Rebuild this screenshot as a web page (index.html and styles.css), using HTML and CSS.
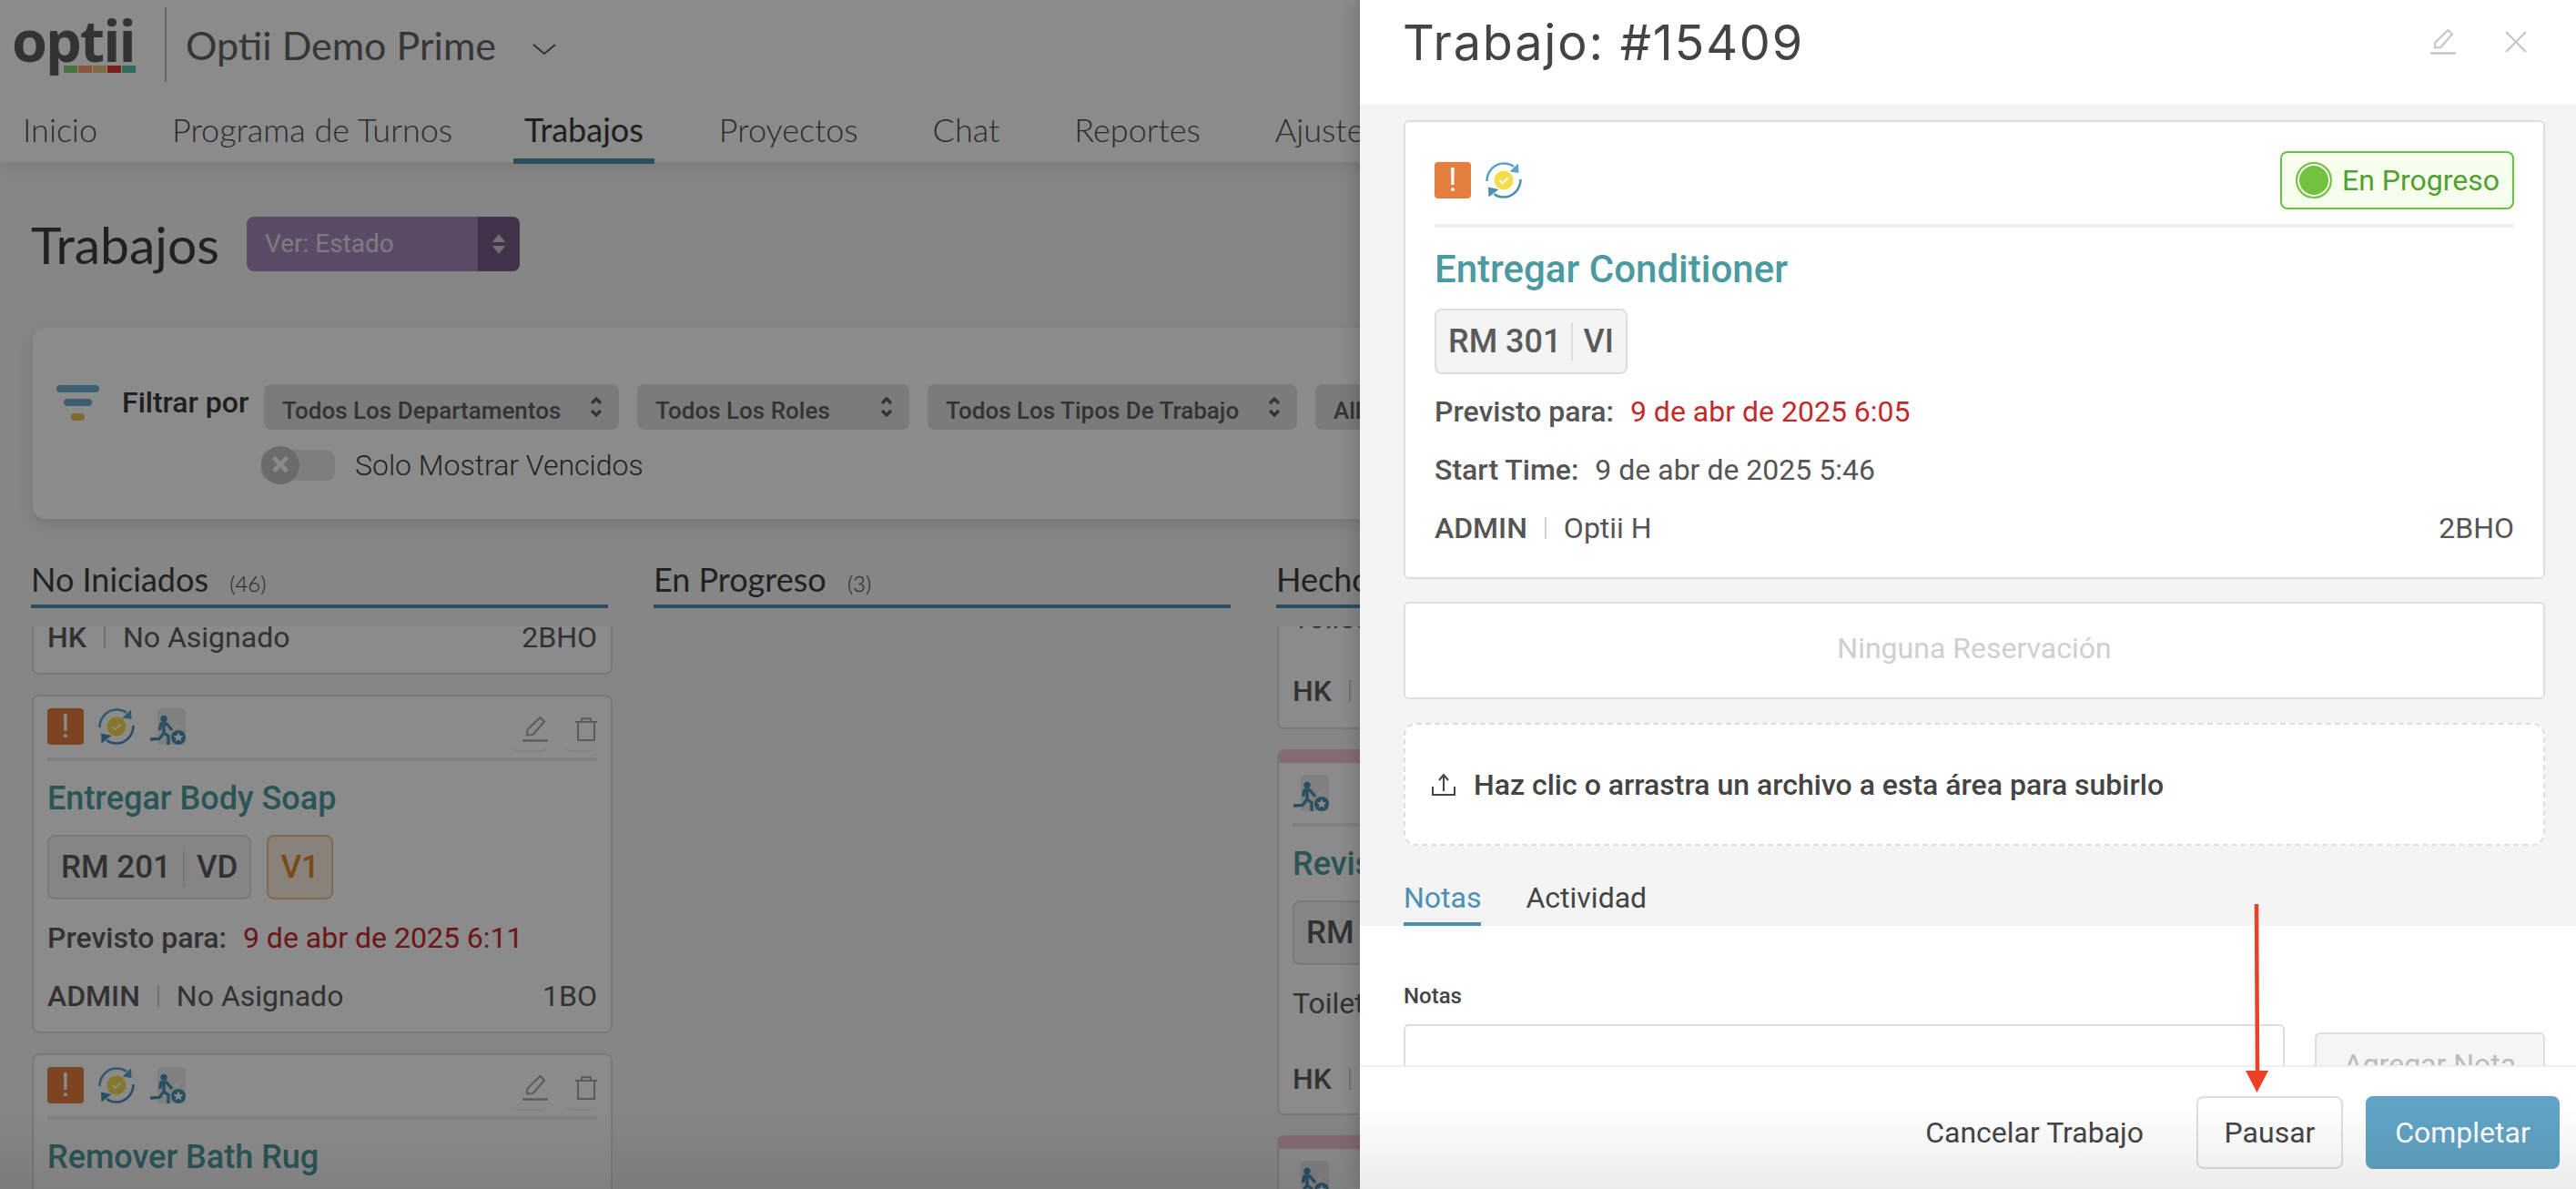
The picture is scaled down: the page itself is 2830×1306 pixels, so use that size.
FILE: index.html
```html
<!DOCTYPE html>
<html lang="es">
<head>
    <meta charset="UTF-8">
    <title>Trabajo #15409</title>
    <link rel="stylesheet" href="styles.css">
</head>
<body>
    <svg class="sprites" width="0" height="0">
        <symbol id="i-sync" viewBox="0 0 40 40">
            <circle cx="20" cy="20" r="10.5" fill="#f5dc4c"/>
            <path d="M15.5 20l3.2 3.2 6-6" fill="none" stroke="#fff" stroke-width="2"/>
            <path d="M1.5 21C1.5 10 10 1.5 20 1.5c4.500 0 8 1.200 11 3.500" fill="none" stroke="#5ba3c9" stroke-width="2.600"/>
            <path d="M38.500 19c0 11-8.500 19.500-18.500 19.500-4.500 0-8-1.200-10.500-3.500" fill="none" stroke="#4a90b4" stroke-width="2.600"/>
            <path d="M36 1.500l0.500 10.500-10-1.500z" fill="#5ba3c9"/>
            <path d="M3.500 38.500l-0.500-11 11.500 2.500z" fill="#4a90b4"/>
        </symbol>
        <symbol id="i-walk" viewBox="0 0 40 40">
            <path d="M9 40V5a5 5 0 0 1 5-5h21a5 5 0 0 1 5 5v35z" fill="#ebebeb"/>
            <circle cx="30" cy="20" r="2" fill="#fafafa"/>
            <circle cx="16" cy="11.500" r="3.700" fill="#4a90b4"/>
            <path d="M11.500 24l1.500-7h6l6 7M16 17v10M16 27l5 3.500V40M16 27l-5 6.500-10 0.500" fill="none" stroke="#4a90b4" stroke-width="3.300"/>
            <circle cx="32" cy="32" r="8" fill="#4a90b4"/>
            <path d="M32 26.500l1.600 3.500 3.800 0.400-2.900 2.500 0.900 3.700-3.400-2-3.400 2 0.900-3.700-2.900-2.500 3.800-0.400z" fill="#fff"/>
        </symbol>
        <symbol id="i-pencil" viewBox="0 0 28 28">
            <path d="M0 26.500h28" fill="none" stroke="currentColor" stroke-width="2.400"/>
            <path d="M5 20.500l0.500-6L19.500 1l4.500 4.500-12.500 14.500z" fill="none" stroke="currentColor" stroke-width="2"/>
        </symbol>
        <symbol id="i-trash" viewBox="0 0 24 26">
            <path d="M0 5h24M7 5V1.200h10V5M3 5v20h18V5" fill="none" stroke="currentColor" stroke-width="2"/>
        </symbol>
        <symbol id="i-updown" viewBox="0 0 14 24">
            <path d="M2 8l5-5 5 5M2 16l5 5 5-5" fill="none" stroke="currentColor" stroke-width="3.200"/>
        </symbol>
    </svg>

    <div class="page">
        <header class="topbar">
            <div class="brand-row">
                <div class="logo">
                    <span class="logo-word">optii</span>
                    <div class="logo-blocks">
                        <span class="b-green"></span><span class="b-orange"></span><span class="b-gold"></span><span class="b-red"></span><span class="b-teal"></span>
                    </div>
                </div>
                <div class="brand-name">Optii Demo Prime</div>
                <svg class="chevron" width="26" height="12" viewBox="0 0 26 12"><path d="M1 1l12 10L25 1" fill="none" stroke="#5a5a5a" stroke-width="2"/></svg>
            </div>
            <nav class="main-nav">
                <a>Inicio</a>
                <a>Programa de Turnos</a>
                <a class="active">Trabajos</a>
                <a>Proyectos</a>
                <a>Chat</a>
                <a>Reportes</a>
                <a>Ajustes</a>
            </nav>
        </header>

        <main class="content">
            <div class="title-row">
                <h1>Trabajos</h1>
                <div class="view-select">
                    <span class="view-label">Ver: Estado</span>
                    <span class="view-handle"><i class="up"></i><i class="down"></i></span>
                </div>
            </div>

            <section class="filters">
                <svg class="filter-icon" width="47" height="39" viewBox="0 0 47 39">
                    <rect width="47" height="8" rx="4" fill="#6eb0d0"/>
                    <rect x="8" y="15" width="31" height="8" rx="4" fill="#6eb0d0"/>
                    <rect x="16" y="31" width="15" height="8" rx="4" fill="#f0c050"/>
                </svg>
                <span class="filter-label">Filtrar por</span>
                <div class="filter-fields">
                    <div class="filter-row">
                        <div class="filter-select w1">Todos Los Departamentos<svg class="updown"><use href="#i-updown"/></svg></div>
                        <div class="filter-select w2">Todos Los Roles<svg class="updown"><use href="#i-updown"/></svg></div>
                        <div class="filter-select w3">Todos Los Tipos De Trabajo<svg class="updown"><use href="#i-updown"/></svg></div>
                        <div class="filter-select w4">All<svg class="updown"><use href="#i-updown"/></svg></div>
                    </div>
                    <div class="toggle-row">
                        <span class="toggle"><span class="knob">&times;</span></span>
                        <span>Solo Mostrar Vencidos</span>
                    </div>
                </div>
            </section>

            <section class="board">
                <div class="column">
                    <h2 class="col-head">No Iniciados <small>(46)</small></h2>
                    <div class="col-list">
                        <div class="card card-tail">
                            <div class="foot-row"><b>HK</b><i class="vbar"></i><span>No Asignado</span><span class="right">2BHO</span></div>
                        </div>
                        <div class="card">
                            <div class="card-top">
                                <span class="alert">!</span>
                                <svg class="ic40"><use href="#i-sync"/></svg>
                                <svg class="ic40"><use href="#i-walk"/></svg>
                                <span class="card-tools">
                                    <span class="tool"><svg class="ic-pencil"><use href="#i-pencil"/></svg></span>
                                    <span class="tool"><svg class="ic-trash"><use href="#i-trash"/></svg></span>
                                </span>
                            </div>
                            <h3 class="card-title">Entregar Body Soap</h3>
                            <div class="chips">
                                <div class="chip"><span>RM 201</span><i></i><span>VD</span></div>
                                <div class="chip chip-v">V1</div>
                            </div>
                            <div class="meta"><b>Previsto para:</b><span class="late">9 de abr de 2025 6:11</span></div>
                            <div class="foot-row"><b>ADMIN</b><i class="vbar"></i><span>No Asignado</span><span class="right">1BO</span></div>
                        </div>
                        <div class="card">
                            <div class="card-top">
                                <span class="alert">!</span>
                                <svg class="ic40"><use href="#i-sync"/></svg>
                                <svg class="ic40"><use href="#i-walk"/></svg>
                                <span class="card-tools">
                                    <span class="tool"><svg class="ic-pencil"><use href="#i-pencil"/></svg></span>
                                    <span class="tool"><svg class="ic-trash"><use href="#i-trash"/></svg></span>
                                </span>
                            </div>
                            <h3 class="card-title">Remover Bath Rug</h3>
                        </div>
                    </div>
                </div>

                <div class="column">
                    <h2 class="col-head">En Progreso <small>(3)</small></h2>
                    <div class="col-list"></div>
                </div>

                <div class="column">
                    <h2 class="col-head">Hecho</h2>
                    <div class="col-list">
                        <div class="card card-tail tail-tall">
                            <div class="meta cut">Toilet Paper</div>
                            <div class="foot-row"><b>HK</b><i class="vbar"></i><span>No Asignado</span></div>
                        </div>
                        <div class="card card-pink">
                            <div class="card-top">
                                <svg class="ic40"><use href="#i-walk"/></svg>
                            </div>
                            <h3 class="card-title">Revisar Toilet</h3>
                            <div class="chips">
                                <div class="chip"><span>RM 105</span><i></i><span>VD</span></div>
                            </div>
                            <div class="meta">Toilet Paper</div>
                            <div class="foot-row"><b>HK</b><i class="vbar"></i><span>No Asignado</span></div>
                        </div>
                        <div class="card card-pink">
                            <div class="card-top">
                                <svg class="ic40"><use href="#i-walk"/></svg>
                            </div>
                        </div>
                    </div>
                </div>
            </section>
        </main>
    </div>

    <div class="overlay"></div>

    <aside class="drawer">
        <div class="drawer-head">
            <h2>Trabajo: #15409</h2>
            <svg class="ic-pencil head-pencil"><use href="#i-pencil"/></svg>
            <svg class="head-close" width="24" height="24" viewBox="0 0 24 24"><path d="M1 1l22 22M23 1L1 23" fill="none" stroke="currentColor" stroke-width="2"/></svg>
        </div>

        <div class="drawer-body">
            <div class="drawer-top">
                <div class="job-card">
                    <div class="job-top">
                        <span class="alert">!</span>
                        <svg class="ic40"><use href="#i-sync"/></svg>
                        <span class="status"><i class="status-dot"></i>En Progreso</span>
                    </div>
                    <h3 class="job-title">Entregar Conditioner</h3>
                    <div class="chip job-chip"><span>RM 301</span><i></i><span>VI</span></div>
                    <div class="job-meta"><b>Previsto para:</b><span class="late">9 de abr de 2025 6:05</span></div>
                    <div class="job-meta"><b>Start Time:</b><span>9 de abr de 2025 5:46</span></div>
                    <div class="foot-row job-meta"><b>ADMIN</b><i class="vbar"></i><span>Optii H</span><span class="right">2BHO</span></div>
                </div>

                <div class="no-booking">Ninguna Reservación</div>

                <div class="upload">
                    <svg width="26" height="24" viewBox="0 0 26 24"><path d="M13 19V2M8 7l5-6 5 6M1 14v9h24v-9" fill="none" stroke="#444" stroke-width="2"/></svg>
                    <span>Haz clic o arrastra un archivo a esta área para subirlo</span>
                </div>

                <div class="tabs">
                    <span class="tab active">Notas</span>
                    <span class="tab">Actividad</span>
                </div>
            </div>

            <div class="notes-pane">
                <label class="notes-label">Notas</label>
                <div class="notes-row">
                    <div class="notes-input"></div>
                    <button class="add-note">Agregar Nota</button>
                </div>
            </div>
        </div>

        <div class="drawer-foot">
            <button class="btn-link">Cancelar Trabajo</button>
            <button class="btn-pause">Pausar</button>
            <button class="btn-done">Completar</button>
        </div>
    </aside>

    <div class="fade"></div>

    <svg class="red-arrow" width="26" height="208" viewBox="0 0 26 208">
        <path d="M12 0l1 184" fill="none" stroke="#ee4025" stroke-width="4.500"/>
        <path d="M0 183h25l-12.500 24z" fill="#ee4025"/>
    </svg>
</body>
</html>
```

FILE: styles.css
```css
* {
    box-sizing: border-box;
}
html, body {
    margin: 0;
    height: 100%;
}
body {
    width: 2830px;
    height: 1306px;
    overflow: hidden;
    position: relative;
    background: #f6f6f6;
    font-family: Roboto, "Liberation Sans", sans-serif;
    color: #5c5c5c;
}
.sprites {
    position: absolute;
}
h1, h2, h3 {
    margin: 0;
    font-weight: 400;
}
b {
    font-weight: 500;
}
i {
    font-style: normal;
}

/* top bar */
.topbar {
    height: 178px;
    background: #fff;
    box-shadow: 0 4px 20px rgba(0, 0, 0, 0.1);
    position: relative;
}
.brand-row {
    display: flex;
    align-items: center;
    height: 98px;
    padding-left: 13px;
}
.logo {
    width: 170px;
    height: 82px;
    border-right: 2px solid #b8b8b8;
    position: relative;
}
.logo-word {
    display: block;
    font-family: "Open Sans", sans-serif;
    font-weight: 700;
    font-size: 63px;
    line-height: 72px;
    letter-spacing: -2px;
    color: #5e5e5e;
}
.logo-blocks {
    position: absolute;
    left: 57px;
    top: 64px;
    display: flex;
    gap: 1px;
}
.logo-blocks span {
    width: 15px;
    height: 8px;
}
.b-green { background: #83d374; }
.b-orange { background: #f8a26c; }
.b-gold { background: #eec476; }
.b-red { background: #e03838; }
.b-teal { background: #55c6b0; }
.brand-name {
    margin-left: 21px;
    font-family: Lato, sans-serif;
    font-size: 43px;
    color: #636363;
}
.chevron {
    margin-left: 40px;
    margin-top: 10px;
}
.main-nav {
    display: flex;
    gap: 52px;
    padding: 22px 0 0 10px;
    font-family: Lato, sans-serif;
    font-size: 36px;
    font-weight: 300;
    line-height: 44px;
    color: #505050;
}
.main-nav a {
    padding: 0 15px 10px;
    border-bottom: 6px solid transparent;
}
.main-nav a.active {
    font-weight: 400;
    color: #3a3a3a;
    border-bottom-color: #4f8fa8;
    padding: 0 12px 10px;
    margin: 0 4px 0 0;
}

/* page content */
.content {
    padding: 60px 0 0 34px;
}
.title-row {
    display: flex;
    align-items: center;
    gap: 30px;
    height: 60px;
}
.title-row h1 {
    font-family: Lato, sans-serif;
    font-size: 57px;
    color: #3e3e3e;
}
.view-select {
    display: flex;
    width: 300px;
    height: 60px;
    border-radius: 8px;
    overflow: hidden;
    background: #a98abb;
    color: #ffffffc4;
    font-size: 28px;
}
.view-label {
    flex: 1;
    padding-left: 20px;
    line-height: 60px;
}
.view-handle {
    width: 46px;
    background: #775e86;
    display: flex;
    flex-direction: column;
    align-items: center;
    justify-content: center;
    gap: 4px;
}
.view-handle i {
    width: 0;
    height: 0;
    border-left: 7px solid transparent;
    border-right: 7px solid transparent;
}
.view-handle .up {
    border-bottom: 9px solid #ffffffb0;
}
.view-handle .down {
    border-top: 9px solid #ffffffb0;
}

/* filters */
.filters {
    margin: 62px 0 0 2px;
    width: 2700px;
    height: 210px;
    background: #fff;
    border-radius: 14px;
    box-shadow: 0 6px 18px rgba(0, 0, 0, 0.13);
    display: flex;
    align-items: flex-start;
    padding: 62px 0 0 26px;
}
.filter-icon {
    margin-top: 1px;
}
.filter-label {
    margin-left: 25px;
    width: 156px;
    font-size: 32px;
    font-weight: 500;
    line-height: 40px;
    color: #3a3a3a;
}
.filter-row {
    display: flex;
    gap: 20px;
}
.filter-select {
    height: 50px;
    border-radius: 8px;
    background: #e2e2e2;
    padding: 11px 0 0 20px;
    font-size: 26px;
    line-height: 36px;
    font-weight: 500;
    color: #5e5e5e;
    position: relative;
}
.updown {
    position: absolute;
    right: 18px;
    top: 13px;
    width: 14px;
    height: 24px;
}
.w1 { width: 390px; }
.w2 { width: 299px; }
.w3 { width: 406px; }
.w4 { width: 400px; }
.toggle-row {
    display: flex;
    align-items: center;
    gap: 22px;
    margin: 18px 0 0 -3px;
    height: 42px;
    font-size: 32px;
    font-weight: 300;
    color: #404040;
}
.toggle {
    width: 81px;
    height: 34px;
    border-radius: 10px;
    background: #e8e8e8;
    display: flex;
    align-items: center;
}
.knob {
    width: 42px;
    height: 42px;
    border-radius: 50%;
    background: #c4c4c4;
    color: #fff;
    font-size: 38px;
    font-weight: 700;
    line-height: 40px;
    text-align: center;
}

/* board */
.board {
    display: flex;
    gap: 50px;
    margin-top: 40px;
}
.column {
    width: 634px;
    flex: none;
}
.col-head {
    height: 58px;
    border-bottom: 4px solid #538fb0;
    font-family: Lato, sans-serif;
    font-size: 36px;
    line-height: 52px;
    color: #3e3e3e;
}
.col-head small {
    font-size: 24px;
    font-weight: 300;
    margin-left: 14px;
}
.col-list {
    margin-top: 20px;
    width: 640px;
    height: 618px;
    overflow: hidden;
    padding-left: 1px;
}
.card {
    width: 638px;
    background: #fff;
    border: 2px solid #dedede;
    border-radius: 8px;
    padding: 0 15px 19px;
    margin-bottom: 22px;
}
.card-tail {
    display: flow-root;
    border-top: 0;
    border-radius: 0 0 8px 8px;
    height: 53px;
}
.card-tail .foot-row {
    margin-top: 0;
    line-height: 24px;
}
.tail-tall {
    height: 113px;
}
.meta.cut {
    height: 40px;
    margin-top: -29px;
}
.tail-tall .foot-row {
    margin-top: 40px;
    line-height: 40px;
}
.card-pink {
    border-top: 15px solid #f3c6cf;
    height: 402px;
}
.card-top {
    display: flex;
    align-items: flex-start;
    gap: 16px;
    height: 71px;
    padding-top: 13px;
    border-bottom: 4px solid #ececec;
}
.card-pink .card-top {
    height: 70px;
}
.alert {
    width: 40px;
    height: 40px;
    border-radius: 4px;
    background: #e57d3e;
    color: #fff;
    font-size: 36px;
    font-weight: 400;
    line-height: 40px;
    text-align: center;
}
.ic40 {
    width: 40px;
    height: 40px;
}
.card-tools {
    margin-left: auto;
    margin-top: 9px;
    display: flex;
    gap: 18px;
    color: #a8a8a8;
}
.tool {
    display: block;
    height: 39px;
    width: 40px;
    border-bottom: 2px solid #f0f0f0;
    border-radius: 0 0 8px 8px;
}
.tool:last-child {
    width: 36px;
}
.ic-pencil {
    display: block;
    width: 28px;
    height: 28px;
    margin-left: auto;
}
.ic-trash {
    display: block;
    width: 24px;
    height: 26px;
    margin: 1px 0 0 auto;
}
.card-title {
    margin-top: 16px;
    font-size: 36px;
    font-weight: 500;
    line-height: 50px;
    color: #4f9a9f;
}
.chips {
    display: flex;
    gap: 17px;
    margin-top: 15px;
}
.chip {
    display: inline-flex;
    align-items: center;
    gap: 13px;
    height: 71px;
    padding: 0 13px;
    border: 2px solid #dedede;
    border-radius: 8px;
    background: #f4f4f4;
    font-size: 35px;
    font-weight: 500;
    color: #5a5a5a;
}
.chip i {
    width: 2px;
    height: 42px;
    background: #dedede;
}
.chip-v {
    border-color: #f2c28a;
    background: #fbeee0;
    color: #e08a2c;
}
.meta {
    margin-top: 22px;
    font-size: 32px;
    line-height: 40px;
}
.meta b {
    margin-right: 18px;
}
.late {
    color: #c4292c;
}
.foot-row {
    display: flex;
    align-items: center;
    margin-top: 24px;
    font-size: 32px;
    line-height: 40px;
}
.card-pink .foot-row {
    margin-top: 43px;
}
.vbar {
    width: 2px;
    height: 24px;
    margin: 0 19px;
    background: #cfcfcf;
}
.right {
    margin-left: auto;
}

/* dim layer */
.overlay {
    position: absolute;
    inset: 0;
    background: rgba(0, 0, 0, 0.455);
}
.fade {
    position: absolute;
    left: 0;
    right: 0;
    bottom: 0;
    height: 90px;
    background: linear-gradient(rgba(0, 0, 0, 0), rgba(0, 0, 0, 0.08));
}

/* drawer */
.drawer {
    position: absolute;
    top: 0;
    right: 0;
    bottom: 0;
    width: 1336px;
    background: #fff;
    box-shadow: -6px 0 16px rgba(0, 0, 0, 0.15);
    display: flex;
    flex-direction: column;
}
.drawer-head {
    height: 114px;
    flex: none;
    display: flex;
    align-items: flex-start;
    padding: 0 54px 0 47px;
    color: #c4c4c4;
}
.drawer-head h2 {
    flex: 1;
    font-family: Inter, sans-serif;
    font-size: 54px;
    letter-spacing: 1.8px;
    line-height: 66px;
    margin-top: 14px;
    color: #444;
}
.head-pencil {
    margin: 32px 0 0;
}
.head-close {
    margin: 34px 0 0 54px;
}
.drawer-body {
    flex: 1;
    overflow: hidden;
    min-height: 0;
}
.drawer-top {
    background: #f4f4f4;
    padding: 18px 34px 0 48px;
    height: 903px;
}
.job-card {
    height: 504px;
    background: #fff;
    border: 2px solid #dedede;
    border-radius: 6px;
    padding: 0 32px;
}
.job-top {
    display: flex;
    align-items: center;
    gap: 16px;
    height: 116px;
    padding-top: 16px;
    border-bottom: 4px solid #f0f0f0;
}
.status {
    margin-left: auto;
    display: flex;
    align-items: center;
    gap: 11px;
    height: 64px;
    padding: 0 14px 0 15px;
    border: 2px solid #6cbf3f;
    border-radius: 8px;
    background: #f6ffed;
    font-size: 32px;
    color: #52a030;
}
.status-dot {
    width: 40px;
    height: 40px;
    border-radius: 50%;
    background: #72c240;
    border: 2px solid #72c240;
    box-shadow: inset 0 0 0 2px #fff;
}
.job-title {
    margin-top: 21px;
    font-size: 42px;
    font-weight: 500;
    line-height: 50px;
    color: #4a9a9f;
}
.job-chip {
    margin-top: 18px;
    height: 72px;
    gap: 11px;
    font-size: 36px;
}
.job-meta {
    margin-top: 24px;
    font-size: 32px;
    line-height: 40px;
    color: #555;
}
.job-chip + .job-meta {
    margin-top: 21px;
}
.job-meta > b:first-child {
    margin-right: 18px;
}
.foot-row.job-meta > b:first-child {
    margin-right: 0;
}
.no-booking {
    margin-top: 25px;
    height: 107px;
    background: #fff;
    border: 2px solid #dedede;
    border-radius: 6px;
    text-align: center;
    font-size: 32px;
    line-height: 99px;
    color: #cfcfcf;
}
.upload {
    margin-top: 26px;
    height: 135px;
    background: #fff;
    border: 2px dashed #dedede;
    border-radius: 14px;
    padding-left: 29px;
    display: flex;
    align-items: center;
    gap: 20px;
    font-size: 32px;
    font-weight: 500;
    color: #444;
}
.tabs {
    display: flex;
    gap: 49px;
    margin-top: 37px;
    font-size: 32px;
    line-height: 40px;
    color: #444;
}
.tab {
    padding-bottom: 7px;
    border-bottom: 4px solid transparent;
}
.tab.active {
    color: #4a90b4;
    border-bottom-color: #4a90b4;
}
.notes-pane {
    background: #fff;
    padding: 0 34px 0 48px;
}
.notes-label {
    display: block;
    padding-top: 58px;
    font-size: 24px;
    font-weight: 500;
    line-height: 38px;
    color: #444;
}
.notes-row {
    display: flex;
    align-items: flex-start;
    gap: 33px;
    margin-top: 12px;
}
.notes-input {
    width: 968px;
    height: 90px;
    border: 2px solid #dedede;
    border-radius: 6px;
}
.add-note {
    width: 253px;
    height: 70px;
    margin-top: 9px;
    border: 2px solid #dedede;
    border-radius: 6px;
    background: #f5f5f5;
    font: 400 32px Roboto, sans-serif;
    color: #bbb;
}
.drawer-foot {
    flex: none;
    height: 136px;
    border-top: 2px solid #eee;
    background: #fff;
    display: flex;
    align-items: flex-start;
    justify-content: flex-end;
    padding: 32px 18px 0 0;
}
.drawer-foot button {
    height: 80px;
    font: 400 32px Roboto, sans-serif;
    border-radius: 8px;
    cursor: pointer;
}
.btn-link {
    border: 0;
    background: none;
    color: #444;
    padding: 0;
    margin-right: 58px;
}
.btn-pause {
    width: 161px;
    border: 2px solid #dedede;
    background: #fff;
    color: #444;
    margin-right: 25px;
}
.btn-done {
    width: 213px;
    border: 0;
    background: #60a3c4;
    color: #fff;
}

.red-arrow {
    position: absolute;
    left: 2467px;
    top: 993px;
}
```
